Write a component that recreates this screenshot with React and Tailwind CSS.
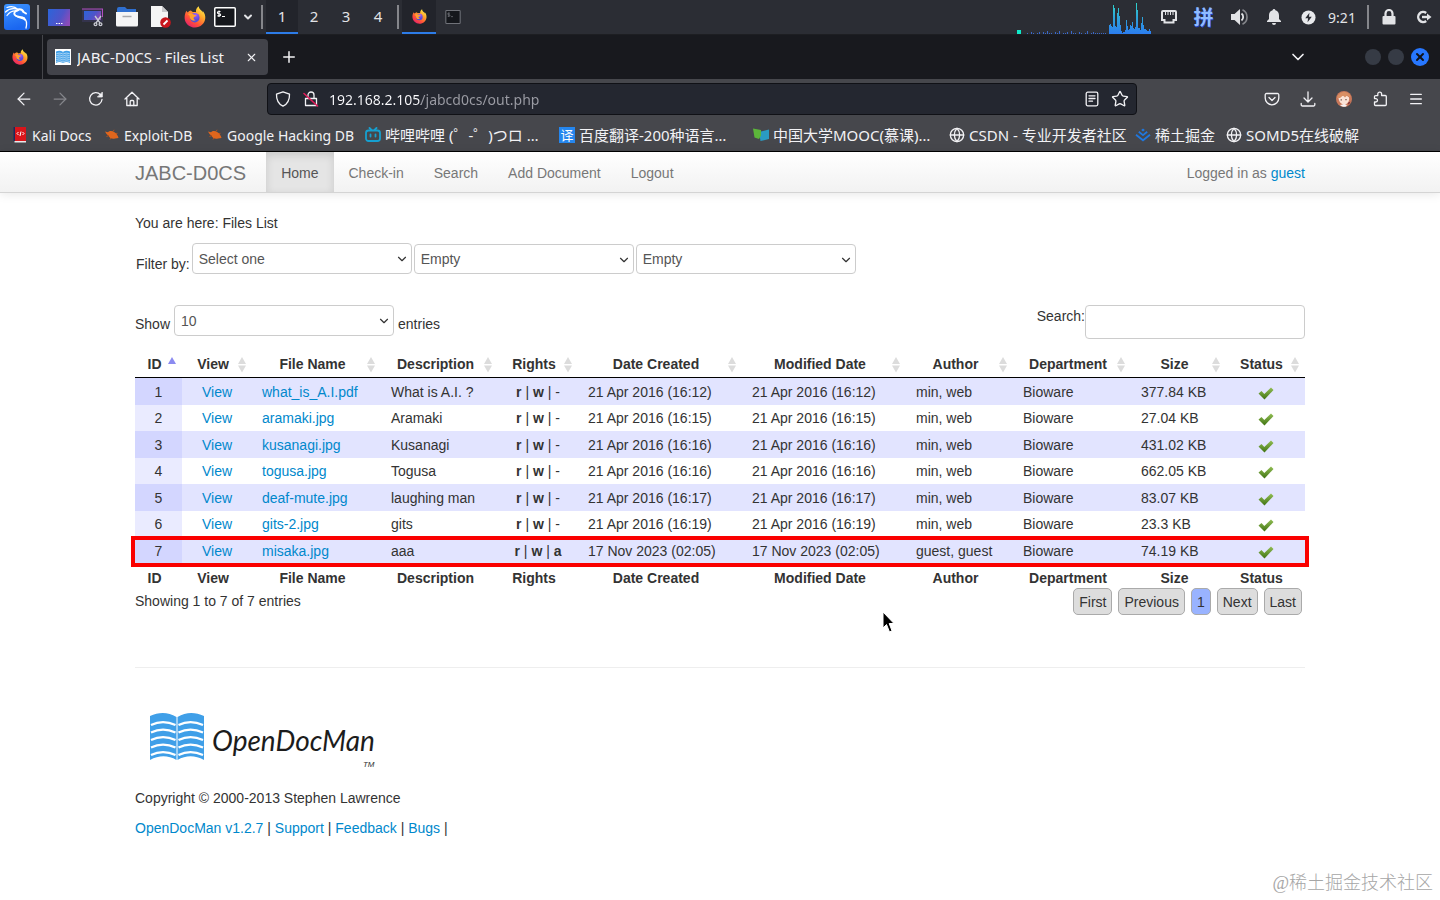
import React, { useState } from "react";
import {
  ArrowLeft,
  ArrowRight,
  ChevronDown,
  Globe,
  Menu,
  Plus,
  Star,
  X,
} from "lucide-react";

const files = [
  { id: 1, name: "what_is_A.I.pdf", desc: "What is A.I. ?", last: "-", date: "21 Apr 2016 (16:12)", author: "min, web", size: "377.84 KB" },
  { id: 2, name: "aramaki.jpg", desc: "Aramaki", last: "-", date: "21 Apr 2016 (16:15)", author: "min, web", size: "27.04 KB" },
  { id: 3, name: "kusanagi.jpg", desc: "Kusanagi", last: "-", date: "21 Apr 2016 (16:16)", author: "min, web", size: "431.02 KB" },
  { id: 4, name: "togusa.jpg", desc: "Togusa", last: "-", date: "21 Apr 2016 (16:16)", author: "min, web", size: "662.05 KB" },
  { id: 5, name: "deaf-mute.jpg", desc: "laughing man", last: "-", date: "21 Apr 2016 (16:17)", author: "min, web", size: "83.07 KB" },
  { id: 6, name: "gits-2.jpg", desc: "gits", last: "-", date: "21 Apr 2016 (16:19)", author: "min, web", size: "23.3 KB" },
  { id: 7, name: "misaka.jpg", desc: "aaa", last: "a", date: "17 Nov 2023 (02:05)", author: "guest, guest", size: "74.19 KB" },
];

const columns = [
  { label: "ID", width: "w-[47px]" },
  { label: "View", width: "w-[70px]" },
  { label: "File Name", width: "w-[129px]" },
  { label: "Description", width: "w-[117px]" },
  { label: "Rights", width: "w-[80px]" },
  { label: "Date Created", width: "w-[164px]" },
  { label: "Modified Date", width: "w-[164px]" },
  { label: "Author", width: "w-[107px]" },
  { label: "Department", width: "w-[118px]" },
  { label: "Size", width: "w-[95px]" },
  { label: "Status", width: "w-[79px]" },
];

const FirefoxIcon = ({ className }) => (
  <svg viewBox="0 0 24 24" className={className} aria-hidden="true">
    <defs>
      <linearGradient id="fxBody" x1="0.85" y1="0.05" x2="0.2" y2="0.95">
        <stop offset="0" stopColor="#fff04a" />
        <stop offset="0.35" stopColor="#ffa62b" />
        <stop offset="0.7" stopColor="#ff5138" />
        <stop offset="1" stopColor="#e5226b" />
      </linearGradient>
      <radialGradient id="fxGlobe" cx="0.6" cy="0.2" r="0.9">
        <stop offset="0" stopColor="#a05cff" />
        <stop offset="0.6" stopColor="#5b4ad8" />
        <stop offset="1" stopColor="#3b5bdc" />
      </radialGradient>
    </defs>
    <path
      fill="url(#fxBody)"
      d="M2.600 5.200c.4 1 .9 1.600 1.600 2C5 5.800 6.200 5.100 7.600 5c.3.6 1 1.200 2 1.600 1.300-.2 2.600-.1 3.600.3-.7-2.300.4-5 3-6.600-.1 2.400 1.400 3.500 3 5 .5.6.9 1.100 1.200 1.800.2-.7.100-1.300-.1-2 2.100 2.200 3.200 5.100 2.900 8.300C22.700 19.200 18 23.500 12 23.500S1 19 .7 13.300C.6 10.200 1.200 7.500 2.600 5.200z"
    />
    <circle cx="11.800" cy="12.800" r="5.200" fill="url(#fxGlobe)" />
    <path fill="#ffa12e" d="M4.300 9c2.200-1.500 4.200-1 5.700-.1 1.600.9 3 .7 3.700 1.300-.4 1.400-2.300 1.300-3 2.300-.6 1 .1 2.700 2 3-3.300 1.700-6.900-.9-6.400-4.500z" />
  </svg>
);

const TerminalIcon = ({ className }) => (
  <svg viewBox="0 0 22 20" className={className} fill="none" stroke="currentColor" aria-hidden="true">
    <rect x="0.750" y="0.750" width="20.500" height="18.500" rx="1" fill="#15171c" strokeWidth="1.500" />
    <path d="M6.500 4.500h-2a1 1 0 0 0 0 2.200h1a1 1 0 0 1 0 2.200H3.400M5 3.500v6.500M8 9.500h3" strokeWidth="1.100" />
  </svg>
);

const KaliIcon = () => (
  <svg viewBox="0 0 28 26" className="h-[26px] w-7" aria-hidden="true">
    <defs>
      <linearGradient id="kaliBg" x1="0" y1="0" x2="0.3" y2="1">
        <stop offset="0" stopColor="#3d94ff" />
        <stop offset="1" stopColor="#1a66f0" />
      </linearGradient>
    </defs>
    <rect x="1" y="0" width="26" height="26" rx="3" fill="url(#kaliBg)" />
    <g fill="none" stroke="#fff" strokeLinecap="round" strokeLinejoin="round">
      <path strokeWidth="1.200" d="M4 3.500c4-1.500 8-1 11 2M2.500 8C6 4.500 10.500 4 15 5.500M4 11.500C6.500 8 10 6.500 14 7" />
      <path strokeWidth="2" d="M15 5.500c2.500-.5 4.500.3 5.500 2.500l2.500 1.500" />
      <path strokeWidth="1.800" d="M15.500 6c-4 .8-5.500 3.700-3 5.600 2.200 1.600 6 1 8.700 2.600" />
      <path strokeWidth="1.300" d="M21 14c2.500 1.800 3.200 5 2 10M13 12c3 2.500 7 2 9 4" />
    </g>
  </svg>
);

const DesktopIcon = ({ cut }) => (
  <svg viewBox="0 0 22 20" className="h-5 w-[22px]" aria-hidden="true">
    <defs>
      <linearGradient id="deskBg" x1="0" y1="0.2" x2="1" y2="0.6">
        <stop offset="0" stopColor="#2f63d8" />
        <stop offset="0.6" stopColor="#4f54c9" />
        <stop offset="1" stopColor="#8b4bb8" />
      </linearGradient>
    </defs>
    {cut ? (
      <>
        <rect x="0" y="2" width="21" height="13" fill="#34334c" />
        <path fill="url(#deskBg)" d="M2 4h17v9H2z" />
        <path d="M0 2h21M20.500 2v8" stroke="#b14fc0" fill="none" />
        <g stroke="#c9cbd3" fill="none" strokeWidth="1.300">
          <path d="M13 9l5 7M19 9l-5 7" />
          <circle cx="13.500" cy="17.200" r="1.400" />
          <circle cx="18.500" cy="17.200" r="1.400" />
        </g>
      </>
    ) : (
      <>
        <path fill="url(#deskBg)" d="M0 2h22v17H0z" />
        <path d="M8 16.500h1.500M10.500 16.500H12M13 16.500h1.500" stroke="#fff" strokeWidth="1.200" />
      </>
    )}
  </svg>
);

const FolderIcon = () => (
  <svg viewBox="0 0 22 20" className="h-5 w-[22px]" aria-hidden="true">
    <path fill="#2f6fd0" d="M1 2a2 2 0 0 1 2-2h6l2 2h9v5H1z" />
    <path fill="#f4f4f5" d="M0 5h22v13a1.500 1.500 0 0 1-1.500 1.500h-19A1.500 1.500 0 0 1 0 18z" />
    <path stroke="#a9a9ad" strokeWidth="1.500" d="M6.500 9.500h9" />
  </svg>
);

const EditorIcon = () => (
  <svg viewBox="0 0 20 22" className="h-[22px] w-5" aria-hidden="true">
    <path fill="#f5f5f5" d="M0 0h11l6 6v15H0z" />
    <path fill="#c9c9cc" d="M11 0l6 6h-6z" />
    <circle cx="14.500" cy="16.500" r="5.300" fill="#c9161c" />
    <path d="M12.500 18.500l4-4" stroke="#fff" strokeWidth="1.800" />
  </svg>
);

const load = [9, 10, 8, 7, 29, 26, 8, 7, 21, 26, 18, 9, 3, 1, 2, 2, 4, 14, 8, 4, 5, 9, 8, 12, 6, 5, 7, 31, 24, 6, 6, 4, 11, 17, 9, 5, 5, 4, 3, 3, 5, 3];
const idle = [0, 0, 1, 0, 2, 1, 0, 1, 2, 0, 2, 1, 3, 1, 1, 0, 2, 1, 3, 0, 1, 1, 2, 0, 3, 1, 1, 0, 2, 1, 0, 1, 3, 0, 1, 2, 1, 1, 1, 1, 1, 1];

const CpuGraph = () => (
  <svg viewBox="0 0 134 34" className="h-[34px] w-[134px]" aria-hidden="true" shapeRendering="crispEdges">
    <defs>
      <linearGradient id="cpu" x1="0" y1="0" x2="0" y2="34" gradientUnits="userSpaceOnUse">
        <stop offset="0" stopColor="#2fe0c8" />
        <stop offset="0.5" stopColor="#2ea6d8" />
        <stop offset="1" stopColor="#2c7df0" />
      </linearGradient>
    </defs>
    <path fill="#0fe8c8" d="M0 30h4v4H0z" />
    {idle.map((h, i) => (
      <rect key={i} x={6 + i * 2} y={34 - h} width="1" height={h} fill="#3a68c9" />
    ))}
    {load.map((h, i) => (
      <rect key={i} x={92 + i} y={34 - h} width="1" height={h} fill="url(#cpu)" />
    ))}
  </svg>
);

const Divider = ({ className }) => (
  <span className={`flex justify-center ${className}`}>
    <span className="h-6 w-[2px] bg-[#85868b]" />
  </span>
);

const Launcher = ({ label, className = "w-[34px]", children }) => (
  <button aria-label={label} className={`flex h-[34px] items-center justify-center ${className}`}>
    {children}
  </button>
);

const Panel = () => (
  <div className="flex h-[35px] items-center justify-between border-b border-[#1d1e22] bg-[#2b2d34] font-['Noto_Sans',sans-serif] text-[15px] text-[#e2e3e6]">
    <div className="flex items-center">
      <Launcher label="Applications"><KaliIcon /></Launcher>
      <Divider className="w-2" />
      <Launcher label="Show desktop"><DesktopIcon /></Launcher>
      <Launcher label="Screenshot"><DesktopIcon cut /></Launcher>
      <Launcher label="File manager"><FolderIcon /></Launcher>
      <Launcher label="Text editor"><EditorIcon /></Launcher>
      <Launcher label="Firefox"><FirefoxIcon className="h-[22px] w-[22px]" /></Launcher>
      <Launcher label="Terminal" className="w-[26px]">
        <TerminalIcon className="h-5 w-[22px] text-white" />
      </Launcher>
      <Launcher label="More terminals" className="w-5">
        <ChevronDown size={12} strokeWidth={4} />
      </Launcher>
      <Divider className="w-2" />
      {["1", "2", "3", "4"].map((n) => (
        <button
          key={n}
          className={`h-[34px] w-8 border-b-2 ${n === "1" ? "border-[#2d7ce8] bg-[#22242b]" : "border-transparent"}`}
        >
          {n}
        </button>
      ))}
      <Divider className="w-2" />
      <Launcher label="Firefox window" className="w-[34px] border-b-2 border-[#2d7ce8] bg-[#22242b]">
        <FirefoxIcon className="h-[15px] w-[15px]" />
      </Launcher>
      <Launcher label="Terminal window">
        <TerminalIcon className="h-[14px] w-4 text-[#707279]" />
      </Launcher>
    </div>
    <div className="flex items-center">
      <CpuGraph />
      <Launcher label="Network" className="w-[35px]">
        <svg viewBox="0 0 16 14" className="h-[14px] w-4" fill="none" stroke="currentColor" strokeWidth="2">
          <path d="M2 1h12a1 1 0 0 1 1 1v8h-2.500v2.500h-9V10H1V2a1 1 0 0 1 1-1z" />
          <path d="M4.500 2v3M7 2v3M9.500 2v3M12 2v3" strokeWidth="1" />
        </svg>
      </Launcher>
      <Launcher label="Input method" className="w-[35px]">
        <span className="font-['Noto_Sans_CJK_SC',sans-serif] text-[20px] leading-5 font-bold text-[#8fbcff] [text-shadow:1px_1px_0_#1d3fc0]">拼</span>
      </Launcher>
      <Launcher label="Volume" className="w-[35px]">
        <svg viewBox="0 0 18 18" className="h-[18px] w-[18px]" fill="none" stroke="currentColor">
          <path fill="currentColor" stroke="none" d="M1 6h3.500L10 1v16l-5.500-5H1z" />
          <path strokeWidth="1.800" d="M11.500 5.500a4.500 4.500 0 0 1 0 7" />
          <path strokeWidth="1.600" stroke="#85868b" d="M12.500 1.800a8 8 0 0 1 0 14.400" />
        </svg>
      </Launcher>
      <Launcher label="Notifications" className="w-[35px]">
        <svg viewBox="0 0 16 16" className="h-4 w-4" fill="currentColor">
          <path d="M8 0a1.500 1.500 0 0 1 1.400 1.300C12 2 13 4 13 6.500V10l2 2v1H1v-1l2-2V6.500C3 4 4 2 6.600 1.300A1.500 1.500 0 0 1 8 0zM6 14h4a2 2 0 0 1-4 0z" />
        </svg>
      </Launcher>
      <Launcher label="Power" className="w-[35px]">
        <svg viewBox="0 0 16 16" className="h-[15px] w-[15px]">
          <circle cx="8" cy="8" r="7.500" fill="#e8e9ec" />
          <path fill="#2b2d34" d="M9 3L4.500 8.800h3L7 13l4.500-5.800h-3z" />
        </svg>
      </Launcher>
      <span className="w-8 text-center text-[14px]">9:21</span>
      <Divider className="w-5" />
      <Launcher label="Lock" className="w-[22px]">
        <svg viewBox="0 0 14 16" className="h-4 w-[14px]">
          <path fill="none" stroke="currentColor" strokeWidth="2.200" d="M3.500 8V4.500a3.500 3.500 0 0 1 7 0V8" />
          <rect x="0.500" y="7" width="13" height="8.500" rx="1" fill="currentColor" />
        </svg>
      </Launcher>
      <Launcher label="Log out" className="ml-2 w-8">
        <svg viewBox="0 0 16 14" className="h-[14px] w-4" fill="none" stroke="currentColor" strokeWidth="2.400">
          <path d="M10.200 3A5 5 0 1 0 10.200 11" />
          <path d="M6 7h6" />
          <path fill="currentColor" stroke="none" d="M11 3.500L15.500 7 11 10.500z" />
        </svg>
      </Launcher>
    </div>
  </div>
);

const BookIcon = ({ className }) => (
  <svg viewBox="0 0 54 48" className={className} aria-hidden="true">
    <path fill="#3f9fe8" d="M0 3c9-4 18-4 26.500 1v43C18 42 9 42 0 47zM54 3c-9-4-18-4-26.500 1v43C36 42 45 42 54 47z" />
    <g fill="none" stroke="#fff" strokeWidth="2.200">
      {[10, 17.5, 25, 32.5, 40].map((y) => (
        <path key={y} d={`M1 ${y + 2}c8-4 16-4 24.500 0M28.500 ${y + 2}c8-4 16-4 24.500 0`} />
      ))}
    </g>
  </svg>
);

const TabStrip = () => (
  <div className="flex h-11 items-center bg-[#18191e] font-['Noto_Sans',sans-serif] text-[#f2f2f5]">
    <span className="flex h-full w-[43px] items-center border-r border-[#45464b] pl-3">
      <FirefoxIcon className="h-4 w-4" />
    </span>
    <div className="ml-1 flex h-9 w-[221px] items-center rounded bg-[#42434a] pr-[10px] pl-2">
      <span className="flex h-4 w-4 items-center justify-center bg-white">
        <BookIcon className="h-[14px] w-[14px]" />
      </span>
      <span className="ml-[6px] flex-1 truncate text-[15px]">JABC-D0CS - Files List</span>
      <button aria-label="Close tab"><X size={13} strokeWidth={2} /></button>
    </div>
    <button aria-label="New tab" className="ml-3"><Plus size={18} strokeWidth={2} /></button>
    <button aria-label="List all tabs" className="ml-auto"><ChevronDown size={20} strokeWidth={2} /></button>
    <div className="mr-[11px] ml-[57px] flex items-center gap-[7px]">
      <button aria-label="Minimize" className="h-4 w-4 rounded-full bg-[#363b45]" />
      <button aria-label="Maximize" className="h-4 w-4 rounded-full bg-[#363b45]" />
      <button aria-label="Close window" className="flex h-[18px] w-[18px] items-center justify-center rounded-full bg-[#2777ff] text-[#10131a]">
        <X size={12} strokeWidth={4} />
      </button>
    </div>
  </div>
);

const ToolButton = ({ label, className = "", children }) => (
  <button aria-label={label} className={`flex w-9 items-center justify-center ${className}`}>
    {children}
  </button>
);

const Stroke = ({ children }) => (
  <svg viewBox="0 0 16 16" className="h-4 w-4" fill="none" stroke="currentColor" strokeWidth="1.300" strokeLinecap="round" strokeLinejoin="round" aria-hidden="true">
    {children}
  </svg>
);

const AddressBar = () => {
  const [url, setUrl] = useState("192.168.2.105/jabcd0cs/out.php");
  return (
    <div className="flex h-10 items-center px-[6px] text-[#f2f2f5]">
      <ToolButton label="Back"><ArrowLeft size={20} strokeWidth={1.5} /></ToolButton>
      <ToolButton label="Forward" className="text-[#85868b]"><ArrowRight size={20} strokeWidth={1.5} /></ToolButton>
      <ToolButton label="Reload">
        <Stroke>
          <path d="M14 8.500A6.200 6.200 0 1 1 12.500 3.800" />
          <path fill="currentColor" d="M14.300 1.500v4.500H9.800z" strokeWidth="0.800" />
        </Stroke>
      </ToolButton>
      <ToolButton label="Home">
        <Stroke>
          <path d="M1 8L8 1.300 15 8M2.800 7v7.500h10.400V7" />
          <path d="M6.200 14.500V10.500a1 1 0 0 1 1-1h1.600a1 1 0 0 1 1 1v4" />
        </Stroke>
      </ToolButton>
      <div className="mx-[117px] flex h-8 flex-1 items-center rounded border border-[#101116] bg-[#242730] px-[7px]">
        <Stroke>
          <path d="M8 .8l6.500 2.400c.2 5.500-1.500 9.500-6.500 12C3 12.700 1.300 8.700 1.500 3.200z" />
        </Stroke>
        <span className="ml-3 flex">
          <Stroke>
            <path d="M2.500 7.500h11v7h-11zM5 7.500V4a3 3 0 0 1 6 0v3.500" />
            <path stroke="#e21b5a" strokeWidth="1.600" d="M1 2.500L14.500 15" />
          </Stroke>
        </span>
        <input
          aria-label="Address"
          value={url}
          onChange={(e) => setUrl(e.target.value)}
          className="ml-[10px] h-6 min-w-0 flex-1 bg-[linear-gradient(90deg,#fbfbfe_92px,#9c9da5_92px)] bg-clip-text text-[14px] text-transparent caret-white outline-none"
        />
        <button aria-label="Reader view">
          <Stroke>
            <rect x="2.200" y="1.200" width="11.600" height="13.600" rx="1.500" />
            <path d="M5 4.800h6M5 7.500h6M5 10.200h3.500" />
          </Stroke>
        </button>
        <button aria-label="Bookmark this page" className="ml-[11px]"><Star size={18} strokeWidth={1.8} /></button>
      </div>
      <ToolButton label="Save to Pocket">
        <Stroke>
          <path d="M2.500 2.500h11a1.300 1.300 0 0 1 1.300 1.300V7a6.800 6.800 0 0 1-13.600 0V3.800a1.300 1.300 0 0 1 1.300-1.300z" />
          <path d="M5 6.500l3 3 3-3" />
        </Stroke>
      </ToolButton>
      <ToolButton label="Downloads">
        <Stroke>
          <path d="M8 .8v10M4 7l4 4 4-4M1.200 12.500v1.300a1.200 1.200 0 0 0 1.200 1.200h11.200a1.200 1.200 0 0 0 1.200-1.200v-1.300" />
        </Stroke>
      </ToolButton>
      <ToolButton label="Account">
        <svg viewBox="0 0 16 16" className="h-4 w-4">
          <circle cx="8" cy="8" r="8" fill="#c9785a" />
          <path fill="#fbe3d6" d="M2.500 6.500C4 4 11.500 3.500 13 6.500c.5 3-.5 6-4.500 7.500-3.500-.5-6-4-6-7.500z" />
          <path fill="#d98f63" d="M1 7c1-4 5-7 9.500-5.500 2.500.8 4 2.500 4 5L11 4.500l-2 2L7 4.500 4 7z" />
          <path fill="#f5f5f7" d="M4 14l4-.8 3 .8-1 1.500c-2 .6-4.500.3-6-1.500z" />
          <path stroke="#5a3a32" strokeWidth="1.100" d="M5.200 8.300v1.200M10 8v1.200" />
          <path fill="#7d2c3a" d="M11.500 12l3-1.500-1.500 3z" />
        </svg>
      </ToolButton>
      <ToolButton label="Extensions">
        <Stroke>
          <path d="M5.800 4.500V3a1.900 1.900 0 0 1 3.800 0v1.500h3.700a1 1 0 0 1 1 1v8a1 1 0 0 1-1 1H3.500a1 1 0 0 1-1-1v-2.500h1.300a1.700 1.700 0 0 0 0-3.400H2.500v-2a1 1 0 0 1 1-1z" />
        </Stroke>
      </ToolButton>
      <ToolButton label="Menu"><Menu size={16} strokeWidth={2} /></ToolButton>
    </div>
  );
};

const BugIcon = () => (
  <svg viewBox="0 0 16 16" className="h-4 w-4" aria-hidden="true">
    <path fill="#e0661d" d="M1 4.500l3 .8C5.500 3.500 8.500 3.800 10.500 5.300c2 1.300 3.500 3.400 4 5.700L11 11.500C8 12.300 5.500 11 4.500 8.800L2.500 7z" />
    <path stroke="#b8501a" strokeWidth="1" fill="none" d="M2.500 9.500l2.500-1M6 12.500l1-1.500M9.500 4l.5-1.200M12 6.500l1.500-.2" />
  </svg>
);

const bookmarks = [
  {
    title: "Kali Docs",
    style: "w-[92px] text-[14px]",
    icon: (
      <svg viewBox="0 0 16 16" className="h-4 w-4">
        <path fill="#1d2a5c" d="M1.500 0h3v14h-3z" />
        <path fill="#d8151b" d="M3 0h11v14H3z" />
        <path fill="#e9e9ea" d="M2.500 14H14v1.500H2.500z" />
        <path fill="none" stroke="#fff" strokeWidth="1" d="M6.500 5L5 6.500 6.500 8M10.500 5L12 6.500 10.500 8M9 4.500l-1 4.500" />
      </svg>
    ),
  },
  { title: "Exploit-DB", style: "w-[103px] text-[14px]", icon: <BugIcon /> },
  { title: "Google Hacking DB", style: "w-[158px] text-[14px]", icon: <BugIcon /> },
  {
    title: "哔哩哔哩 (゜-゜)つロ …",
    style: "w-[194px] text-[15px]",
    icon: (
      <svg viewBox="0 0 16 16" className="h-4 w-4" fill="none" stroke="#16a0d0" strokeWidth="1.800" strokeLinecap="round">
        <rect x="1" y="3.500" width="14" height="10.500" rx="2.500" />
        <path d="M4.500 1l2 2M11.500 1l-2 2M5.500 7.500v2M10.500 7.500v2" />
      </svg>
    ),
  },
  {
    title: "百度翻译-200种语言…",
    style: "w-[194px] text-[15px]",
    icon: (
      <span className="flex h-4 w-4 items-center justify-center bg-[#2586ee] text-[13px] leading-4 text-white">译</span>
    ),
  },
  {
    title: "中国大学MOOC(慕课)…",
    style: "w-[196px] text-[15px]",
    icon: (
      <svg viewBox="0 0 16 16" className="h-4 w-4">
        <path fill="#2a9bc4" d="M6 5l10-2.500v9.500L7.500 14z" />
        <path fill="#5cb63a" d="M0 1.500L8 3v5.500L6 12 1.500 10.500z" />
      </svg>
    ),
  },
  { title: "CSDN - 专业开发者社区", style: "w-[186px] text-[15px]", icon: <Globe size={16} /> },
  {
    title: "稀土掘金",
    style: "w-[91px] text-[15px]",
    icon: (
      <svg viewBox="0 0 16 16" className="h-4 w-4" fill="none" stroke="#1f78e0" strokeWidth="1.800">
        <path d="M8 1.500l1.800 1.500L8 4.500 6.200 3z" fill="#1f78e0" stroke="none" />
        <path d="M3.800 4.800L8 8.200l4.200-3.400M1 7.800l7 5.500 7-5.500" />
      </svg>
    ),
  },
  { title: "SOMD5在线破解", style: "w-[140px] text-[15px]", icon: <Globe size={16} /> },
];

const Bookmarks = () => (
  <div className="flex h-8 items-center overflow-hidden pl-3 text-[#f2f2f5]">
    {bookmarks.map((b) => (
      <a key={b.title} href="#" className={`flex shrink-0 items-center gap-1 whitespace-nowrap ${b.style}`}>
        <span className="shrink-0">{b.icon}</span>
        {b.title}
      </a>
    ))}
  </div>
);

const NavBar = () => (
  <nav className="h-[41px] border-b border-[#d4d4d4] bg-gradient-to-b from-white to-[#f2f2f2] shadow-[0_1px_10px_rgba(0,0,0,0.1)]">
    <div className="mx-auto flex h-10 max-w-[1170px] leading-[42px] text-[#777]">
      <a href="#" className="pr-5 text-[20px]">JABC-D0CS</a>
      <a href="#" className="h-10 bg-[#e5e5e5] px-[15px] text-[#555] shadow-[inset_0_3px_8px_rgba(0,0,0,0.125)]">
        Home
      </a>
      {["Check-in", "Search", "Add Document", "Logout"].map((item) => (
        <a key={item} href="#" className="px-[15px]">{item}</a>
      ))}
      <p className="ml-auto">
        Logged in as <a href="#" className="text-[#0088cc]">guest</a>
      </p>
    </div>
  </nav>
);

const Dropdown = ({ label, value, height = "h-[31px]", id }) => (
  <span className="relative">
    <select
      id={id}
      aria-label={label}
      className={`block w-[220px] appearance-none rounded border border-[#ccc] bg-white px-[6px] text-[#555] ${height}`}
    >
      <option>{value}</option>
    </select>
    <ChevronDown size={14} strokeWidth={2} className="pointer-events-none absolute top-[9px] right-[3px] text-[#333]" />
  </span>
);

const SortIcon = ({ active }) => (
  <svg viewBox="0 0 8 16" className="absolute top-[6px] right-[6px] h-4 w-2" aria-hidden="true">
    {active ? (
      <path fill="#8b8bf0" d="M0 7l4-7 4 7z" />
    ) : (
      <path fill="#dcdcdc" d="M0 7l4-7 4 7zM0 8.500h8l-4 7z" />
    )}
  </svg>
);

const CheckIcon = () => (
  <svg viewBox="0 0 16 13" className="mx-auto h-[13px] w-4" role="img" aria-label="Available">
    <defs>
      <linearGradient id="tick" x1="0" y1="0" x2="0" y2="1">
        <stop offset="0" stopColor="#93bf55" />
        <stop offset="1" stopColor="#3f7312" />
      </linearGradient>
    </defs>
    <path fill="url(#tick)" d="M.5 6.500L3.500 4l2.800 3L13 .5 15.500 3 6.500 12.500z" />
  </svg>
);

const FilesTable = () => (
  <table className="w-full table-fixed border-separate border-spacing-0">
    <thead>
      <tr className="h-[27px]">
        {columns.map((col, i) => (
          <th key={col.label} className={`relative border-b border-black p-0 pr-[18px] pl-[10px] text-center font-bold whitespace-nowrap ${col.width}`}>
            {col.label}
            <SortIcon active={i === 0} />
          </th>
        ))}
      </tr>
    </thead>
    <tbody>
      {files.map((file) => {
        const odd = file.id % 2 === 1;
        return (
          <tr key={file.id} className={`relative whitespace-nowrap ${odd ? "h-[27px] bg-[#e2e4ff]" : "h-[26px] bg-white"}`}>
            <td className={`p-0 text-center ${odd ? "bg-[#d3d6ff]" : "bg-[#eaebff]"}`}>{file.id}</td>
            <td className="p-0 text-center"><a href="#" className="text-[#0088cc]">View</a></td>
            <td className="p-0 pl-[10px]"><a href="#" className="text-[#0088cc]">{file.name}</a></td>
            <td className="p-0 pl-[10px]">{file.desc}</td>
            <td className="p-0 text-center">
              <b>r</b> | <b>w</b> | {file.last === "a" ? <b>a</b> : file.last}
            </td>
            <td className="p-0 pl-[10px]">{file.date}</td>
            <td className="p-0 pl-[10px]">{file.date}</td>
            <td className="p-0 pl-[10px]">{file.author}</td>
            <td className="p-0 pl-[10px]">Bioware</td>
            <td className="p-0 pl-[10px]">{file.size}</td>
            <td className="p-0 pt-[3px]">
              <CheckIcon />
              {file.id === 7 && (
                <span className="pointer-events-none absolute -top-px -right-1 -bottom-[3px] -left-1 border-4 border-[#fa0000]" />
              )}
            </td>
          </tr>
        );
      })}
    </tbody>
    <tfoot>
      <tr className="h-[26px]">
        {columns.map((col) => (
          <th key={col.label} className="p-0 pt-[2px] pr-[18px] pl-[10px] text-center font-bold whitespace-nowrap">{col.label}</th>
        ))}
      </tr>
    </tfoot>
  </table>
);

const Footer = () => (
  <footer className="mt-[52px] border-t border-[#eee]">
    <div className="mt-[45px] ml-[15px] flex h-[62px] items-start gap-2">
      <BookIcon className="h-12 w-[54px]" />
      <span className="font-['Lato',sans-serif] text-[28px] leading-[54px] text-[#1c1c1c] italic">OpenDocMan</span>
      <span className="-ml-5 self-end text-[8px] leading-5 text-[#333] italic">TM</span>
    </div>
    <p className="mt-[13px]">Copyright © 2000-2013 Stephen Lawrence</p>
    <p className="mt-[10px]">
      <a href="#" className="text-[#0088cc]">OpenDocMan v1.2.7</a> | <a href="#" className="text-[#0088cc]">Support</a> |{" "}
      <a href="#" className="text-[#0088cc]">Feedback</a> | <a href="#" className="text-[#0088cc]">Bugs</a> |
    </p>
  </footer>
);

const App = () => {
  const [query, setQuery] = useState("");

  return (
    <div className="relative min-h-screen bg-white">
      <Panel />
      <TabStrip />
      <div className="border-b border-black bg-[#46474c] font-['Noto_Sans','Noto_Sans_CJK_SC',sans-serif]">
        <AddressBar />
        <Bookmarks />
      </div>

      <div className="font-['Liberation_Sans',sans-serif] text-[14px] leading-5 text-[#333]">
        <NavBar />
        <main className="mx-auto max-w-[1170px] pt-5">
          <p>You are here: Files List</p>

          <div className="mt-[10px] flex items-end gap-[2px]">
            <label htmlFor="filter" className="pl-px">Filter by:</label>
            <Dropdown id="filter" value="Select one" />
            <Dropdown label="Filter value" value="Empty" height="h-[30px]" />
            <Dropdown label="Filter detail" value="Empty" height="h-[30px]" />
          </div>

          <div className="mt-[31px] mb-3 flex items-start justify-between">
            <div className="flex items-end gap-1">
              <label htmlFor="length" className="pb-[2px]">Show</label>
              <Dropdown id="length" value="10" />
              <span className="pb-[2px]">entries</span>
            </div>
            <label className="flex items-start">
              <span className="pt-px">Search:</span>
              <input
                type="text"
                value={query}
                onChange={(e) => setQuery(e.target.value)}
                className="h-[34px] w-[220px] rounded border border-[#ccc] bg-white px-[6px]"
              />
            </label>
          </div>

          <FilesTable />

          <div className="flex items-start justify-between">
            <p className="pt-px">Showing 1 to 7 of 7 entries</p>
            <div className="-mt-[2px] flex gap-[6px] pr-[3px]">
              {["First", "Previous", "1", "Next", "Last"].map((p) => (
                <button
                  key={p}
                  className={`h-[27px] rounded-[5px] border border-[#aaa] px-[5px] ${p === "1" ? "bg-[#99b3ff]" : "bg-[#ddd]"}`}
                >
                  {p}
                </button>
              ))}
            </div>
          </div>

          <Footer />
        </main>
      </div>

      {/* mouse pointer */}
      <svg viewBox="0 0 14 22" className="pointer-events-none absolute top-[611px] left-[882px] h-[22px] w-[14px]" aria-hidden="true">
        <path d="M1 1v16l3.500-3.500L7.500 21l2.500-1.200L7.200 12.500H12z" fill="#000" stroke="#fff" strokeWidth="1" />
      </svg>
      <span className="absolute right-[7px] bottom-[5px] font-['Liberation_Serif','Noto_Sans_CJK_SC',sans-serif] text-[18px] leading-6 font-light text-[#a6a6a6]">
        @稀土掘金技术社区
      </span>
    </div>
  );
};

export default App;
